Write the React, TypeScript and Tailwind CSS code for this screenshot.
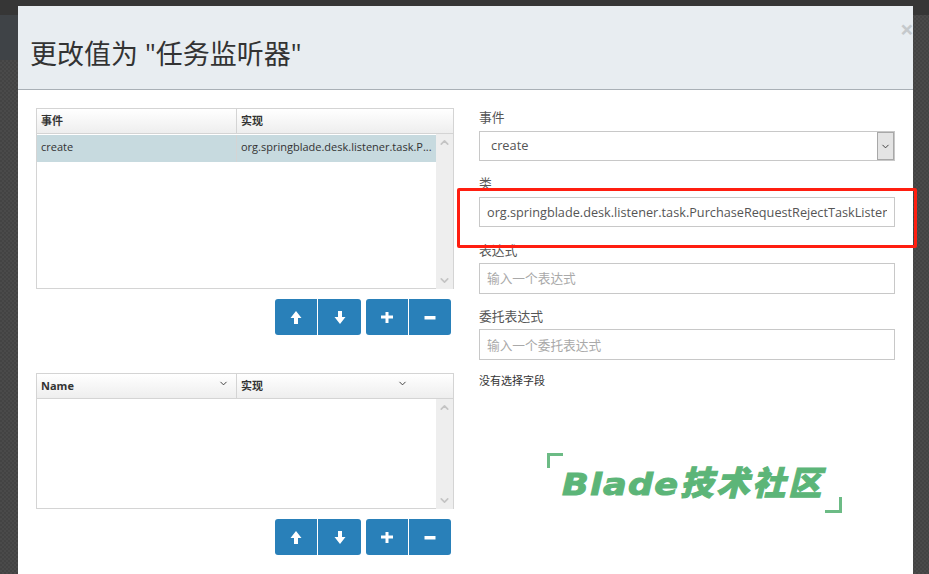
import { ChevronUp, ChevronDown } from "lucide-react";

const font = "font-['Open_Sans','Noto_Sans_CJK_SC',sans-serif]";

function Glyph({ kind }: { kind: "up" | "down" | "plus" | "minus" }) {
  const paths = {
    up: "M6 0 L11.5 7 H8 V13 H4 V7 H0.5 Z",
    down: "M4 0 H8 V6 H11.5 L6 13 L0.5 6 H4 Z",
    plus: "M4.5 1 H7.5 V4.5 H12 V7.5 H7.5 V12 H4.5 V7.5 H0 V4.5 H4.5 Z",
    minus: "M0.5 5 H11.5 V8.5 H0.5 Z",
  };
  return (
    <svg width="12" height="13" viewBox="0 0 12 13" fill="white">
      <path d={paths[kind]} />
    </svg>
  );
}

function SpinButtons() {
  return (
    <div className="mt-[10px] flex justify-end gap-[5px] pr-[3px]">
      <div className="flex h-9 w-[86px] rounded-[3px] bg-[#2980b9]">
        <div className="flex w-[43px] items-center justify-center border-r border-white">
          <Glyph kind="up" />
        </div>
        <div className="flex flex-1 items-center justify-center">
          <Glyph kind="down" />
        </div>
      </div>
      <div className="flex h-9 w-[85px] rounded-[3px] bg-[#2980b9]">
        <div className="flex w-[43px] items-center justify-center border-r border-white">
          <Glyph kind="plus" />
        </div>
        <div className="flex flex-1 items-center justify-center">
          <Glyph kind="minus" />
        </div>
      </div>
    </div>
  );
}

function Scrollbar() {
  return (
    <div className="relative -mb-px flex w-[17px] flex-col items-center justify-between bg-[#eeeeee] pb-[2px] pt-[2px] text-[#c4c4c4]">
      <ChevronUp size={13} strokeWidth={3} />
      <ChevronDown size={13} strokeWidth={3} />
    </div>
  );
}

function HeaderCell({ title, className, sort }: { title: string; className: string; sort?: string }) {
  return (
    <div className={`relative flex items-center px-[4px] text-[11px] font-bold text-[#333333] ${className}`}>
      {title}
      {sort && <ChevronDown size={11} className={`absolute top-[4px] ${sort}`} />}
    </div>
  );
}

function Label({ text, className }: { text: string; className: string }) {
  return <div className={`text-[12.8px] leading-[18px] text-[#555555] ${className}`}>{text}</div>;
}

const inputClass =
  "block w-full border border-[#c8c8c8] bg-white px-[7px] text-[12.7px] text-[#555555] outline-none placeholder:text-[#a9a9a9]";

export default function App() {
  return (
    <div className={`${font} relative h-[574px] w-[929px] overflow-hidden bg-[repeating-conic-gradient(#4a4a4a_0%_25%,#434343_0%_50%)] bg-[length:4px_4px]`}>
      <div className="absolute left-0 top-0 h-[15px] w-full bg-[#363636]" />
      <div className="absolute left-0 top-[15px] h-[45px] w-[18px] bg-[#3f4347]" />
      <div className="relative ml-[18px] mt-[6px] h-[568px] w-[895px] bg-white">
        <div className="flex h-[84px] items-end border-b border-[#a9b0b6] bg-[#e8edf1] pb-[17px] pl-[12px]">
          <h1 className="text-[27px] leading-[36px] text-[#333333]">更改值为 "任务监听器"</h1>
          <span className="absolute left-[882px] top-[10px] text-[24px] font-bold leading-[26px] text-[#c5c9cc]">×</span>
        </div>
        <div className="flex pl-[18px] pt-[18px]">
          <div className="w-[418px]">
            <div className="flex h-[181px] flex-col border border-[#d4d4d4]">
              <div className="flex h-[25px] border-b border-[#d4d4d4] bg-gradient-to-b from-white to-[#eeeeee]">
                <HeaderCell title="事件" className="w-[200px] border-r border-[#d4d4d4]" />
                <HeaderCell title="实现" className="flex-1" />
              </div>
              <div className="flex min-h-0 flex-1">
                <div className="flex-1 bg-white pt-px">
                  <div className="flex h-[27px] bg-[#c7dadf] text-[11px] text-[#333333]">
                    <div className="flex w-[200px] items-center border-r border-[#d4d4d4] px-[4px] pb-[2px]">create</div>
                    <div className="flex flex-1 items-center whitespace-nowrap px-[4px] pb-[2px]">org.springblade.desk.listener.task.P...</div>
                  </div>
                </div>
                <Scrollbar />
              </div>
            </div>
            <SpinButtons />
            <div className="mt-[38px] flex h-[136px] flex-col border border-[#d4d4d4]">
              <div className="flex h-[25px] border-b border-[#d4d4d4] bg-gradient-to-b from-white to-[#eeeeee]">
                <HeaderCell title="Name" className="w-[200px] border-r border-[#d4d4d4]" sort="right-[7px]" />
                <HeaderCell title="实现" className="flex-1" sort="right-[45px]" />
              </div>
              <div className="flex min-h-0 flex-1">
                <div className="flex-1 bg-white" />
                <Scrollbar />
              </div>
            </div>
            <SpinButtons />
          </div>
          <div className="ml-[25px] w-[416px]">
            <Label text="事件" className="" />
            <div className="mt-[5px] flex h-[30px] items-center justify-between border border-[#c8c8c8] pl-[11px] text-[12.8px] text-[#555555]">
              create
              <div className="flex h-full w-[17px] items-center justify-center border border-[#a8a8a8] bg-[#e4e4e4] text-[#333333]">
                <ChevronDown size={11} />
              </div>
            </div>
            <Label text="类" className="mt-[13px]" />
            <input
              readOnly
              className={`${inputClass} mt-[5px] h-[30px]`}
              value="org.springblade.desk.listener.task.PurchaseRequestRejectTaskListener"
            />
            <Label text="表达式" className="mt-[14px]" />
            <input readOnly className={`${inputClass} mt-[4px] h-[31px] pb-[2px]`} placeholder="输入一个表达式" />
            <Label text="委托表达式" className="mt-[13px]" />
            <input readOnly className={`${inputClass} mt-[4px] h-[31px]`} placeholder="输入一个委托表达式" />
            <div className="mt-[13px] text-[11px] leading-[16px] text-[#333333]">没有选择字段</div>
          </div>
        </div>
      </div>
      <div className="absolute left-[457px] top-[188px] h-[60px] w-[460px] rounded-[2px] border-[3px] border-[#ff1e10]" />
      <div className="absolute left-[547px] top-[453px] h-[60px] w-[295px] text-[#5cb578]">
        <div className="absolute left-0 top-0 h-[15px] w-[16px] border-l-[3px] border-t-[3px] border-[#6cbb85]" />
        <div className="absolute bottom-0 right-0 h-[16px] w-[17px] border-b-[3px] border-r-[3px] border-[#6cbb85]" />
        <div className="absolute left-[15px] top-[6px] flex items-baseline whitespace-nowrap italic [-webkit-text-stroke:1px_#5cb578]">
          <span className="mr-[18px] inline-block origin-left scale-x-[1.17] font-['DejaVu_Sans'] text-[30px] font-bold leading-[44px] tracking-[1px]">Blade</span>
          <span className="font-['Noto_Sans_CJK_SC'] text-[33px] font-black leading-[44px] tracking-[3px]">技术社区</span>
        </div>
      </div>
    </div>
  );
}
